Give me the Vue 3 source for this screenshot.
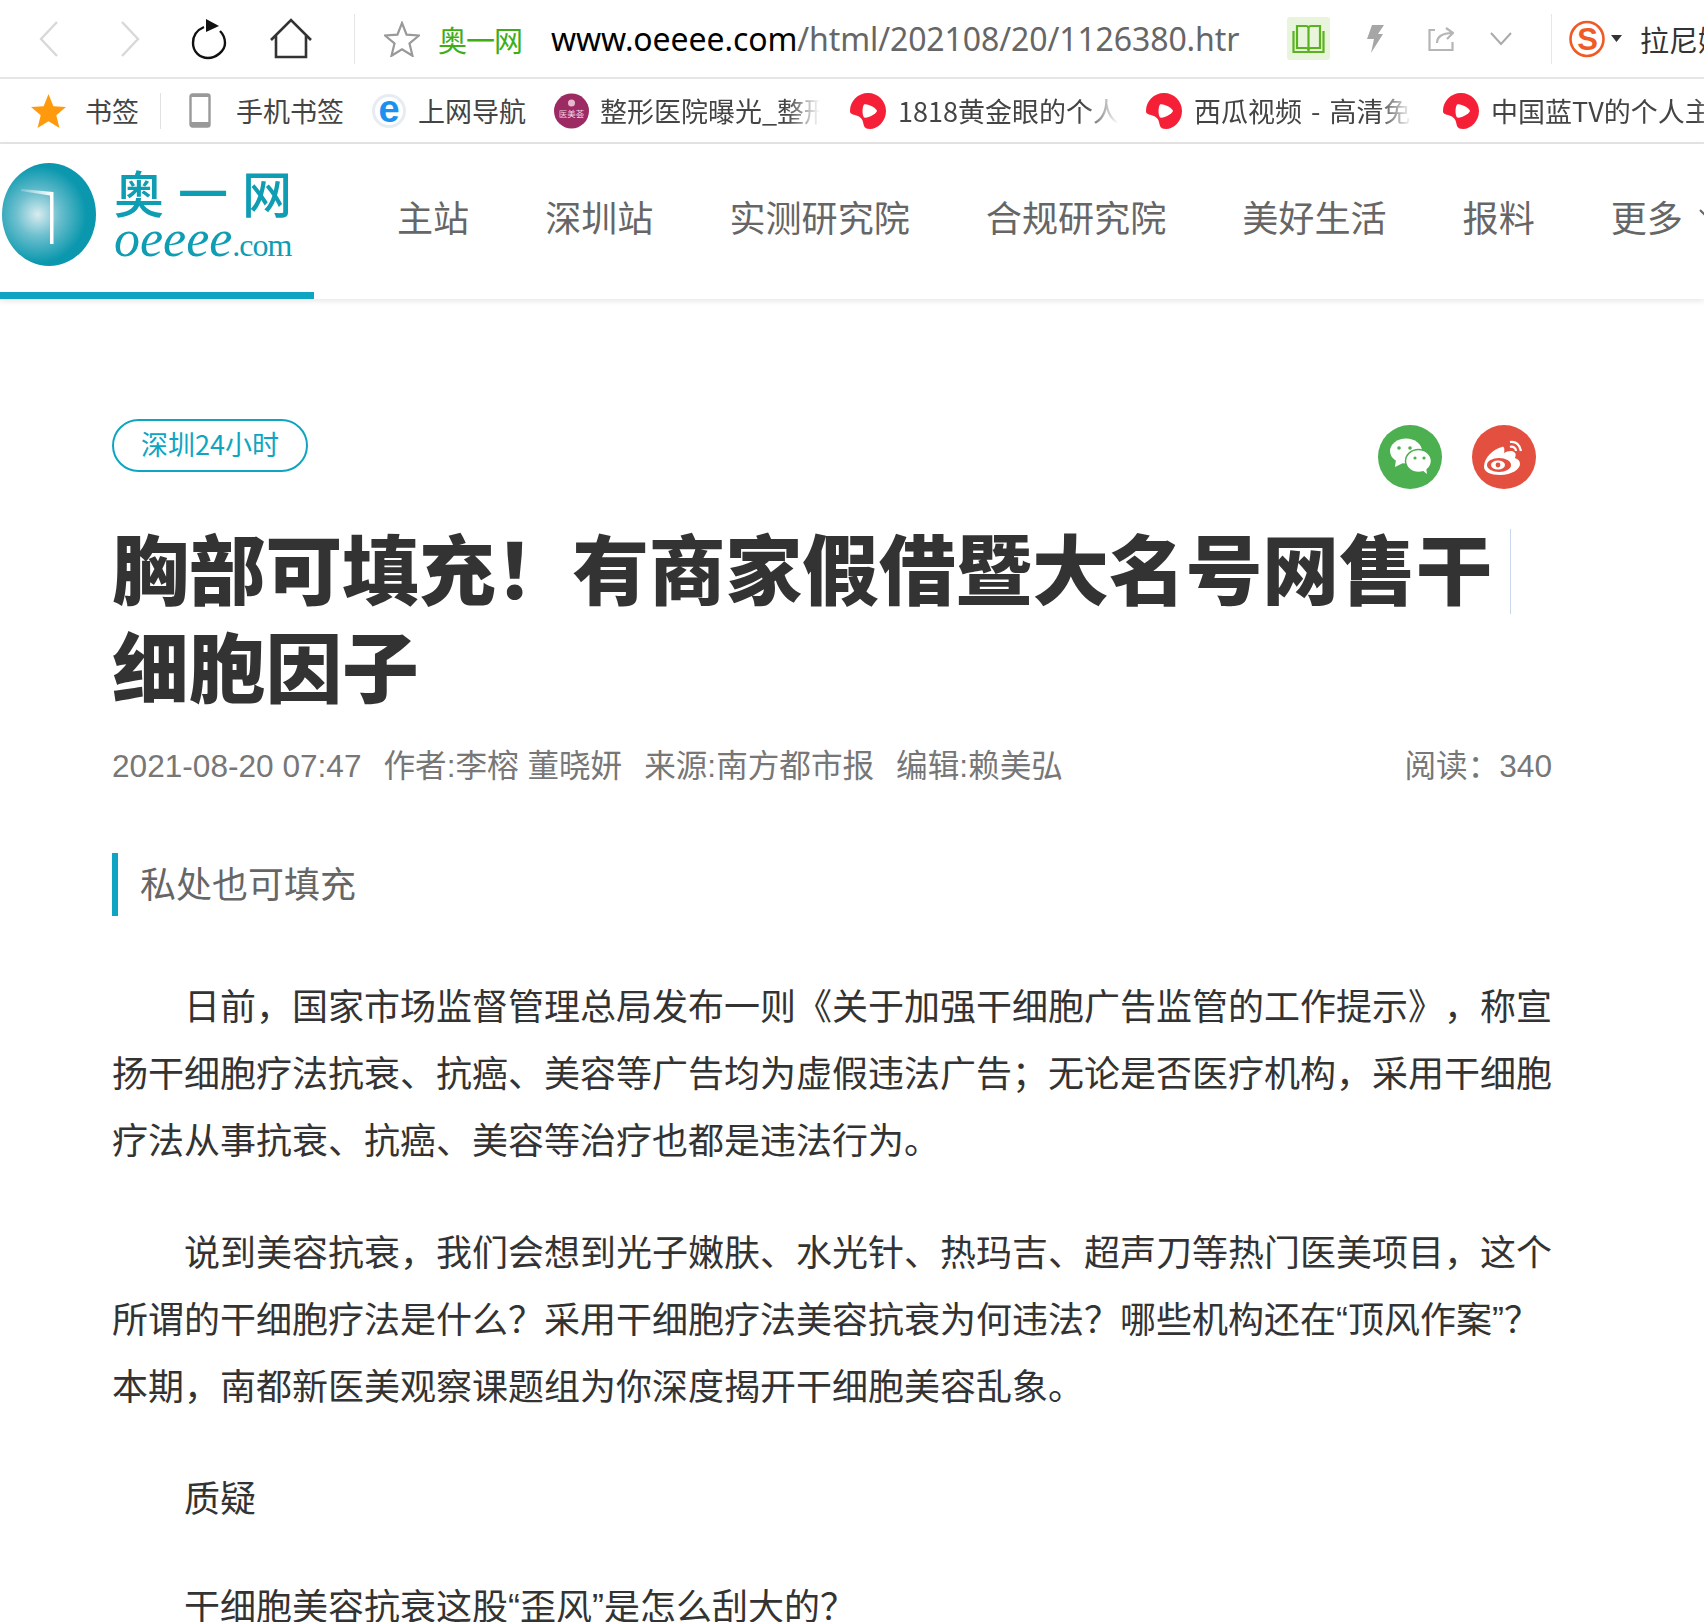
<template>
  <div class="page">
    <!-- browser toolbar -->
    <div class="toolbar">
      <svg class="tb-ico back" width="26" height="40" viewBox="0 0 26 40"><path d="M22 3 6 20l16 17" fill="none" stroke="#d8d8d8" stroke-width="2.400"/></svg>
      <svg class="tb-ico forward" width="26" height="40" viewBox="0 0 26 40"><path d="M5 3l16 17L5 37" fill="none" stroke="#d8d8d8" stroke-width="2.400"/></svg>
      <svg class="tb-ico reload" width="40" height="42" viewBox="0 0 40 42"><path d="M14 9C7 12 3 18 3 25c0 9 7 15 15 15s17-7 17-15c0-5-2-9-5-12" fill="none" stroke="#111" stroke-width="2.400"/><path d="M16 1l13 7-13 6z" fill="#111"/></svg>
      <svg class="tb-ico home" width="44" height="42" viewBox="0 0 44 42"><path d="M2 22 22 2l20 20M7 17v22h30V17" fill="none" stroke="#333" stroke-width="2.600"/></svg>
      <div class="tb-sep first"></div>
      <svg class="tb-ico star" width="36" height="36" viewBox="0 0 36 36"><path d="M18 2l4.600 11.600L35 14.500l-9.500 8 3 12.300L18 28.200 7.500 34.800l3-12.300-9.500-8 12.400-.9z" fill="none" stroke="#999" stroke-width="2.200"/></svg>
      <span class="site-name">奥一网</span>
      <div class="url"><span class="host">www.oeeee.com</span>/html/202108/20/1126380.htr</div>
      <div class="read-btn">
        <svg width="33" height="30" viewBox="0 0 33 30"><path d="M5 2h9c1.500 0 2.500 1 2.500 2.500C16.500 3 17.500 2 19 2h9v22H19c-1.500 0-2.500 1-2.500 2.500 0-1.500-1-2.500-2.500-2.500H5zM16.500 4v24M1.500 7v21h30V7" fill="none" stroke="#5ab31e" stroke-width="2.200"/></svg>
      </div>
      <svg class="tb-ico bolt" width="17" height="30" viewBox="0 0 17 30"><path d="M5 1h12l-6 9h5L4 29l3-14H0z" fill="#a6a6a6"/></svg>
      <svg class="tb-ico share" width="26" height="26" viewBox="0 0 26 26"><path d="M7 4H1.500v20h23v-8M9 17c0-6 5-10 15-10M18 2l7 5-6 6" fill="none" stroke="#b5b5b5" stroke-width="2.200"/></svg>
      <svg class="tb-ico down" width="22" height="14" viewBox="0 0 22 14"><path d="M1 1l10 11L21 1" fill="none" stroke="#aaa" stroke-width="2"/></svg>
      <div class="tb-sep second"></div>
      <svg class="tb-ico sogou" width="38" height="38" viewBox="0 0 38 38"><ellipse cx="19" cy="19" rx="16.500" ry="17" fill="#fff" stroke="#ef5a25" stroke-width="2.600"/><text x="19.500" y="30" text-anchor="middle" class="sogou-s">S</text></svg>
      <svg class="tb-ico caret" width="11" height="7" viewBox="0 0 11 7"><path d="M0 0h11L5.500 7z" fill="#333"/></svg>
      <span class="user">拉尼娜</span>
    </div>

    <!-- bookmarks -->
    <div class="bookmarks">
      <svg class="bm-star" width="35" height="35" viewBox="0 0 36 36"><path d="M18 1l5 12.500 13 1-10 8.500 3.300 13L18 29 6.700 36 10 23 0 14.500l13-1z" fill="#ff9a0e"/></svg>
      <span class="bm-text bm-first">书签</span>
      <div class="bm-sep"></div>
      <svg class="bm-phone" width="22" height="35" viewBox="0 0 22 35"><rect x="1.500" y="1.500" width="19" height="32" rx="2" fill="none" stroke="#999" stroke-width="2.400"/><path d="M2 29h18v5H2zM2 1h18v3H2z" fill="#999"/></svg>
      <span class="bm-text bm-phone-text">手机书签</span>
      <svg class="bm-ie" width="34" height="36" viewBox="0 0 34 36"><circle cx="17" cy="18" r="15.500" fill="#fff" stroke="#e6ecf1" stroke-width="3"/><text x="17" y="29" text-anchor="middle" class="ie-e">e</text></svg>
      <span class="bm-text bm-nav">上网导航</span>
      <svg class="bm-purple" width="37" height="36" viewBox="0 0 36 36"><circle cx="18" cy="18" r="17.500" fill="#9c2a63"/><circle cx="18" cy="10" r="3.500" fill="#e7b8cd"/><text x="18" y="24" text-anchor="middle" class="purple-txt">医美荟</text></svg>
      <span class="bm-text fade bm-w1">整形医院曝光_整形</span>
      <template v-for="b in redMarks" :key="b.text">
        <svg class="bm-red" :style="{ marginLeft: b.gap + 'px' }" width="36" height="36" viewBox="0 0 36 36"><path d="M18 0C28 0 36 8 36 18S28 36 20 36C14 36 14 33 13 29 12 25 9 23 5 22 2 21 0 21 0 18 0 8 8 0 18 0z" fill="#f52037"/><path d="M14 11.500c4-1 12 3.500 13 6.500-1 3-9 7.500-13 6.500-2-3-2-10 0-13z" fill="#fff"/></svg>
        <span class="bm-text fade" :style="{ width: b.width + 'px' }">{{ b.text }}</span>
      </template>
    </div>

    <!-- site nav -->
    <div class="sitenav">
      <div class="logo">
        <div class="ball"><svg class="ball-mark" width="50" height="66" viewBox="0 0 50 66"><defs><linearGradient id="barfade" x1="0" x2="1" y1="0" y2="0"><stop offset="0" stop-color="#fff" stop-opacity=".2"/><stop offset="1" stop-color="#fff"/></linearGradient></defs><path d="M4 7l32 3v4L4 9z" fill="url(#barfade)"/><path d="M33 10h3.500v52H33z" fill="#fff"/></svg></div>
        <div class="logo-text">
          <div class="logo-cn"><span>奥</span><span>一</span><span>网</span></div>
          <div class="logo-en"><i>oeeee</i><span>.com</span></div>
        </div>
      </div>
      <div class="nav-links">
        <a v-for="n in navItems" :key="n">{{ n }}</a>
        <svg class="nav-caret" width="10" height="14" viewBox="0 0 10 14"><path d="M1 1l8 8" fill="none" stroke="#666" stroke-width="2"/></svg>
      </div>
    </div>

    <!-- article -->
    <div class="article">
      <div class="tag-row">
        <span class="tag">深圳24小时</span>
        <div class="share-icons">
          <svg width="64" height="64" viewBox="0 0 64 64"><circle cx="32" cy="32" r="32" fill="#4caf50"/><ellipse cx="28" cy="26" rx="16" ry="12.500" fill="#fff"/><path d="M18 34l-1 8 8-4z" fill="#fff"/><ellipse cx="40.500" cy="36" rx="13" ry="11.500" fill="#fff" stroke="#4caf50" stroke-width="1.500"/><path d="M44 45l5 4-1-7z" fill="#fff"/><circle cx="21" cy="23" r="1.800" fill="#4caf50"/><circle cx="32" cy="23" r="1.800" fill="#4caf50"/><circle cx="37" cy="33" r="1.600" fill="#4caf50"/><circle cx="46" cy="33" r="1.600" fill="#4caf50"/></svg>
          <svg width="64" height="64" viewBox="0 0 64 64"><circle cx="32" cy="32" r="32" fill="#e4503f"/><path d="M30 22c-8 2-18 10-18 20 0 5 7 8 16 8 12 0 20-6 20-11 0-4-3-5-5-6 1-3 1-5-1-6-2-2-7-1-10 1 1-4 0-7-2-6z" fill="#fff"/><ellipse cx="27" cy="40" rx="12" ry="7" fill="#e4503f"/><ellipse cx="26" cy="40" rx="7" ry="4.500" fill="#fff"/><circle cx="26" cy="40" r="2.400" fill="#e4503f"/><path d="M38 17c6-1 10 3 11 9M38 22c3-1 6 1 6 4" fill="none" stroke="#fff" stroke-width="2.200"/></svg>
        </div>
      </div>
      <h1 class="title">胸部可填充&#xFF01;有商家假借暨大名号网售干细胞因子</h1>
      <div class="meta">
        <span>2021-08-20 07:47</span>
        <span>作者:李榕 董晓妍</span>
        <span>来源:南方都市报</span>
        <span>编辑:赖美弘</span>
        <span class="reads">阅读&#xFF1A;340</span>
      </div>
      <div class="summary">私处也可填充</div>
      <p>日前&#xFF0C;国家市场监督管理总局发布一则《关于加强干细胞广告监管的工作提示》&#xFF0C;称宣扬干细胞疗法抗衰、抗癌、美容等广告均为虚假违法广告&#xFF1B;无论是否医疗机构&#xFF0C;采用干细胞疗法从事抗衰、抗癌、美容等治疗也都是违法行为。</p>
      <p>说到美容抗衰&#xFF0C;我们会想到光子嫩肤、水光针、热玛吉、超声刀等热门医美项目&#xFF0C;这个所谓的干细胞疗法是什么&#xFF1F;采用干细胞疗法美容抗衰为何违法&#xFF1F;哪些机构还在&#x201C;顶风作案&#x201D;&#xFF1F;本期&#xFF0C;南都新医美观察课题组为你深度揭开干细胞美容乱象。</p>
      <p class="subhead">质疑</p>
      <p class="after-subhead">干细胞美容抗衰这股&#x201C;歪风&#x201D;是怎么刮大的&#xFF1F;</p>
    </div>
  </div>
</template>

<script setup>
const navItems = ["主站", "深圳站", "实测研究院", "合规研究院", "美好生活", "报料", "更多"];
const redMarks = [
  { text: "1818黄金眼的个人主页", width: 220, gap: 30 },
  { text: "西瓜视频 - 高清免费", width: 218, gap: 28 },
  { text: "中国蓝TV的个人主页", width: 240, gap: 31 },
];
</script>

<style>
html, body { overflow: hidden; background: #fff; }
</style>

<style scoped>
.page {
  width: 1704px;
  height: 1622px;
  overflow: hidden;
  background: #fff;
  font-family: "Noto Sans CJK SC", "Liberation Sans", sans-serif;
}
.toolbar {
  height: 77px;
  display: flex;
  align-items: center;
  border-bottom: 2px solid #e6e6e6;
  white-space: nowrap;
  overflow: hidden;
}
.tb-ico { flex: none; }
.back { margin-left: 35px; }
.forward { margin-left: 56px; }
.reload { margin-left: 47px; }
.home { margin-left: 39px; }
.tb-sep { width: 1px; height: 50px; background: #e6e6e6; flex: none; }
.tb-sep.first { margin-left: 41px; }
.star { margin-left: 29px; }
.site-name { margin-left: 18px; font-size: 29px; color: #3fae16; letter-spacing: -1px; width: 90px; flex: none; }
.url {
  margin-left: 23px;
  width: 690px;
  flex: none;
  font-family: "Noto Sans", sans-serif;
  font-size: 32px;
  letter-spacing: -.1px;
  color: #666;
  overflow: hidden;
}
.host { color: #000; }
.read-btn {
  margin-left: 46px;
  width: 43px;
  height: 43px;
  flex: none;
  display: flex;
  align-items: center;
  justify-content: center;
  background: #e8f5dc;
  border-radius: 3px;
}
.bolt { margin-left: 37px; }
.share { margin-left: 44px; }
.down { margin-left: 36px; }
.tb-sep.second { margin-left: 39px; }
.sogou { margin-left: 16px; }
.sogou-s { font: 700 31px "Liberation Sans", sans-serif; fill: #ef5a25; }
.caret { margin-left: 5px; }
.user { margin-left: 18px; font-size: 29px; color: #333; flex: none; }

.bookmarks {
  height: 63px;
  display: flex;
  align-items: center;
  border-bottom: 2px solid #e6e6e6;
  white-space: nowrap;
  overflow: hidden;
}
.bookmarks svg { flex: none; }
.bm-text { font-size: 27px; color: #444; flex: none; word-spacing: 3px; }
.fade {
  overflow: hidden;
  -webkit-mask-image: linear-gradient(to right, #000 85%, transparent);
  mask-image: linear-gradient(to right, #000 85%, transparent);
}
.bm-star { margin-left: 31px; }
.bm-first { margin-left: 19px; }
.bm-sep { width: 1px; height: 36px; margin-left: 21px; background: #e2e2e2; flex: none; }
.bm-phone { margin-left: 28px; }
.bm-phone-text { margin-left: 25px; }
.bm-ie { margin-left: 28px; }
.ie-e { font: 700 38px "Liberation Sans", sans-serif; fill: #1a90f0; }
.bm-nav { margin-left: 12px; }
.bm-purple { margin-left: 27px; }
.purple-txt { font: 8.500px "Noto Sans CJK SC", sans-serif; fill: #f0d4e2; }
.bm-w1 { margin-left: 10px; width: 220px; }
.bm-red { margin-right: 12px; }

.sitenav {
  height: 155px;
  display: flex;
  box-shadow: 0 2px 6px rgba(0, 0, 0, .1);
  position: relative;
  overflow: hidden;
}
.logo {
  width: 314px;
  height: 155px;
  box-sizing: border-box;
  border-bottom: 7px solid #0fa5c2;
  display: flex;
  flex: none;
  padding: 19px 0 0 2px;
}
.ball {
  width: 94px;
  height: 103px;
  border-radius: 50%;
  background: radial-gradient(circle at 38% 50%, #d8ecf0 0%, #6cbfce 28%, #0b98ae 62%, #0a95aa 100%);
  display: flex;
  align-items: center;
  justify-content: center;
}
.ball-mark { margin-right: 14px; }
.logo-text { margin-left: 18px; margin-top: -3px; color: #0f9db4; }
.logo-cn {
  width: 178px;
  display: flex;
  justify-content: space-between;
  font-size: 50px;
  line-height: 62px;
  font-weight: 500;
}
.logo-en { line-height: 44px; margin-top: -5px; font-family: "Liberation Serif", serif; }
.logo-en i { font-size: 52px; letter-spacing: 0; }
.logo-en span { font-size: 32px; letter-spacing: -1px; }
.nav-links {
  display: flex;
  align-items: center;
  gap: 76px;
  margin-left: 83px;
  height: 155px;
  font-size: 36.100px;
  color: #666;
  white-space: nowrap;
  padding-bottom: 12px;
  box-sizing: border-box;
}
.nav-caret { margin-left: -60px; }

.article { width: 1440px; margin-left: 112px; }
.tag-row {
  display: flex;
  justify-content: space-between;
  align-items: flex-start;
  padding-top: 120px;
}
.tag {
  width: 196px;
  height: 53px;
  box-sizing: border-box;
  border: 2px solid #0fa5c2;
  border-radius: 27px;
  text-align: center;
  font-size: 27px;
  line-height: 45px;
  color: #0fa5c2;
}
.share-icons {
  display: flex;
  gap: 30px;
  margin: 6px 16px 0 0;
}
.title {
  position: relative;
  width: 1390px;
  margin: 28px 0 0;
  font-size: 76.700px;
  line-height: 98px;
  font-weight: 900;
  color: #333;
}
/* stray caret line right of the headline */
.title::after {
  content: "";
  position: absolute;
  left: 1398px;
  top: 12px;
  width: 1px;
  height: 85px;
  background: #c9d6ee;
}
.meta {
  display: flex;
  gap: 22px;
  margin-top: 31px;
  font-size: 31.600px;
  line-height: 44px;
  color: #777;
  font-family: "Liberation Sans", "Noto Sans CJK SC", sans-serif;
}
.reads { margin-left: auto; }
.summary {
  margin-top: 65px;
  height: 63px;
  border-left: 6px solid #0fa5c2;
  padding-left: 22px;
  font-size: 36px;
  line-height: 59px;
  color: #666;
}
p {
  margin: 45px 0 0;
  font-family: "Liberation Sans", "Noto Sans CJK SC", sans-serif;
  font-size: 36px;
  line-height: 67px;
  color: #333;
  text-indent: 72px;
  text-spacing-trim: space-all;
}
.summary + p { margin-top: 58px; }
.subhead { margin-top: 45px; }
.after-subhead { margin-top: 41px; }
</style>
